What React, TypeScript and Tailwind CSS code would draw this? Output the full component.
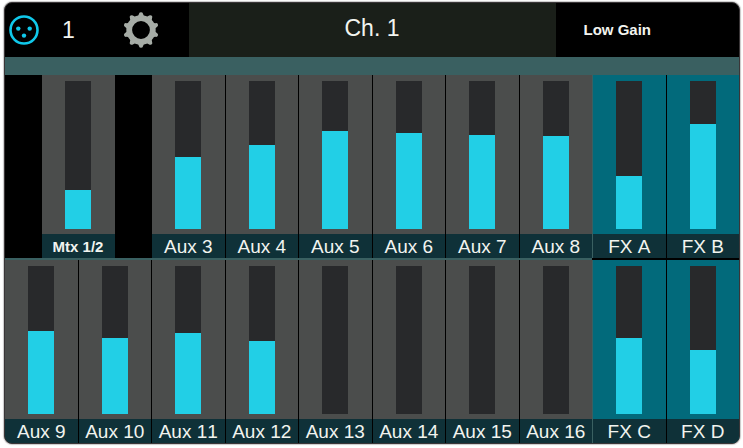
import React from 'react';
import clsx from 'clsx';

type StripKind = 'aux' | 'fx' | 'matrix';

interface Send {
  name: string;
  level: number; // percent of full travel
  kind: StripKind;
  groupStart?: boolean;
}

const TOP_ROW: Send[] = [
  { name: 'Mtx 1/2', level: 26.5, kind: 'matrix' },
  { name: 'Aux 3', level: 48.7, kind: 'aux' },
  { name: 'Aux 4', level: 56.5, kind: 'aux' },
  { name: 'Aux 5', level: 66.2, kind: 'aux' },
  { name: 'Aux 6', level: 64.9, kind: 'aux' },
  { name: 'Aux 7', level: 63.8, kind: 'aux' },
  { name: 'Aux 8', level: 62.8, kind: 'aux' },
  { name: 'FX A', level: 36, kind: 'fx', groupStart: true },
  { name: 'FX B', level: 71, kind: 'fx' },
];

const BOTTOM_ROW: Send[] = [
  { name: 'Aux 9', level: 56, kind: 'aux' },
  { name: 'Aux 10', level: 51.4, kind: 'aux' },
  { name: 'Aux 11', level: 55, kind: 'aux' },
  { name: 'Aux 12', level: 49, kind: 'aux' },
  { name: 'Aux 13', level: 0, kind: 'aux' },
  { name: 'Aux 14', level: 0, kind: 'aux' },
  { name: 'Aux 15', level: 0, kind: 'aux' },
  { name: 'Aux 16', level: 0, kind: 'aux' },
  { name: 'FX C', level: 51.4, kind: 'fx', groupStart: true },
  { name: 'FX D', level: 43, kind: 'fx' },
];

const TEETH = [0, 36, 72, 108, 144, 180, 216, 252, 288, 324];

const XlrIcon: React.FC = () => (
  <svg viewBox="0 0 30 30" className="w-[30px] h-[30px]" aria-hidden="true">
    <circle cx="15" cy="15" r="13.5" fill="none" stroke="#10c8ea" strokeWidth="2.6" />
    <circle cx="9.3" cy="13.6" r="2.2" fill="#10c8ea" />
    <circle cx="20.7" cy="13.6" r="2.2" fill="#10c8ea" />
    <circle cx="15" cy="20.6" r="2.2" fill="#10c8ea" />
  </svg>
);

const GearIcon: React.FC = () => (
  <svg viewBox="-18 -18 36 36" className="w-9 h-9" aria-hidden="true">
    <circle r="11.8" fill="none" stroke="#a6aca6" strokeWidth="5.8" />
    {TEETH.map(angle => (
      <path
        key={angle}
        d="M-3 -13.8 L-1.9 -16.4 Q-1.6 -17.8 0 -17.8 Q1.6 -17.8 1.9 -16.4 L3 -13.8 Z"
        fill="#a6aca6"
        transform={`rotate(${angle})`}
      />
    ))}
  </svg>
);

const Strip: React.FC<{ send: Send }> = ({ send }) => (
  <button
    type="button"
    className={clsx(
      'flex flex-col items-center pt-1.5',
      send.kind === 'fx' ? 'bg-[#026a7b]' : 'bg-[#4b4d4c]',
      send.kind === 'matrix' ? 'w-1/2' : 'w-full',
      send.groupStart && 'shadow-[-1px_0_#3a6061]'
    )}
  >
    <span className="flex h-[148px] w-[26px] items-end bg-[#28292b]">
      <span className="w-full bg-[#22cfe6]" style={{ height: `${send.level}%` }} />
    </span>
    <span
      className={clsx(
        'mt-[5px] h-6 w-full whitespace-nowrap bg-[#0f3138] text-center leading-[26px]',
        send.kind === 'matrix' ? 'text-[15px] font-bold' : 'text-[19px]'
      )}
    >
      {send.name}
    </span>
  </button>
);

const StripRow: React.FC<{ sends: Send[] }> = ({ sends }) => (
  <div className="grid grid-cols-10 gap-x-px">
    {sends.map(send => (
      <div
        key={send.name}
        className={clsx('flex justify-center', send.kind === 'matrix' && 'col-span-2')}
      >
        <Strip send={send} />
      </div>
    ))}
  </div>
);

const App: React.FC = () => (
  <div className="bg-white pt-0.5 pr-[3px] pb-0.5 pl-1 font-['Liberation_Sans',Arial,sans-serif] text-[#f2f4ef] [font-kerning:none]">
    <main className="overflow-hidden rounded-lg border border-[#3a3638] bg-black shadow-[0_0_1px_1px_#c9c9c9]">
      <header className="grid h-[54px] grid-cols-4">
        <div className="flex items-center pl-1">
          <XlrIcon />
          <span className="ml-[23px] text-[23px]">1</span>
          <button type="button" aria-label="Settings" className="ml-12">
            <GearIcon />
          </button>
        </div>
        <h1 className="col-span-2 flex items-center justify-center bg-[#1a1f19] pb-1 text-[23px]">Ch. 1</h1>
        <div className="flex items-center pl-7 text-[15px] font-bold">Low Gain</div>
      </header>

      <div className="h-[18px] bg-[#3a6061]" />

      <StripRow sends={TOP_ROW} />
      {/* Divider runs teal under the aux sends, black under the FX sends */}
      <div className="grid grid-cols-10">
        <div className="col-span-8 h-0.5 bg-[#3a6061]" />
      </div>
      <StripRow sends={BOTTOM_ROW} />
    </main>
  </div>
);

export default App;
